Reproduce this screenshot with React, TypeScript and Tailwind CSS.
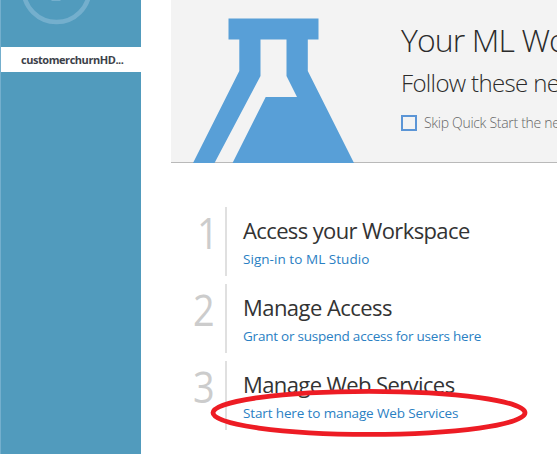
const steps = [
  { n: '1', title: 'Access your Workspace', link: 'Sign-in to ML Studio', numClass: 'pr-[6px]', titleClass: 'tracking-[-0.62px]', linkClass: 'tracking-[0.05px]' },
  { n: '2', title: 'Manage Access', link: 'Grant or suspend access for users here', numClass: 'pr-[10px]', titleClass: 'tracking-[-0.55px]', linkClass: 'tracking-[-0.22px]' },
  { n: '3', title: 'Manage Web Services', link: 'Start here to manage Web Services', numClass: 'pr-[10px]', titleClass: 'tracking-[-0.6px]', linkClass: 'tracking-[-0.13px]' },
];

function Sidebar() {
  return (
    <aside className="w-[141px] shrink-0 border-l border-[#74afcd] bg-[#519bbd]">
      <svg className="block h-[47px] w-full" viewBox="1 0 140 47">
        <circle cx="56.5" cy="-11" r="33" fill="none" stroke="#74afcd" strokeWidth="4.5" />
        <rect x="51.5" y="-4" width="9" height="5" fill="#74afcd" />
      </svg>
      <div className="h-[25px] bg-white pl-5 text-[11px] leading-[26px] font-bold tracking-[-0.45px] whitespace-nowrap text-[#3c4149]">
        customerchurnHD...
      </div>
    </aside>
  );
}

function Flask() {
  return (
    <svg className="ml-[22px] block h-[163px] w-[161px] shrink-0" viewBox="193 0 161 163" fill="#589fd7">
      <path
        fillRule="evenodd"
        d="M228.5 18.5H318.5V39.5H307.8V71L354 163H232.5L265.7 97H297L286.5 76V39.5H260.5V76L214.5 163H193L239.3 71V39.5H228.5Z"
      />
    </svg>
  );
}

export default function App() {
  return (
    <div className="relative flex h-[454px] w-[557px] overflow-hidden bg-white font-['Open_Sans','Noto_Sans',sans-serif]">
      <Sidebar />
      <main className="ml-[30px] min-w-0 flex-1 overflow-hidden">
        <header className="flex h-[163px] border-b border-[#b9b9b9] bg-[#f3f3f3] whitespace-nowrap">
          <Flask />
          <div className="ml-[47px] pt-[18px] text-[#2b2b2b]">
            <h1 className="h-[44px] text-[32px] leading-[44px] font-light tracking-[-0.9px]">Your ML Wo</h1>
            <h2 className="mt-[3px] h-[36px] text-[24px] leading-[36px] font-light tracking-[-0.65px]">Follow these ne</h2>
            <label className="mt-[12px] flex h-5 items-center gap-[7px] text-[14px] leading-5 font-light tracking-[-0.3px] text-[#666]">
              <span className="h-4 w-4 border-2 border-[#5b95d6]" />
              Skip Quick Start the ne
            </label>
          </div>
        </header>
        <ol className="mt-[44px] flex flex-col gap-2">
          {steps.map((s) => (
            <li key={s.n} className="flex h-[69px]">
              <div className={`flex w-[54px] justify-end text-[43px] leading-[51px] font-[370] text-[#ccc] ${s.numClass}`}>
                <span className="origin-right scale-x-[0.88]">{s.n}</span>
              </div>
              <div className="border-l-2 border-[#e0e0e0] pl-4 whitespace-nowrap">
                <h3 className={`mt-[7px] h-8 text-[22px] leading-8 text-[#333] ${s.titleClass}`}>{s.title}</h3>
                <a className={`mt-[3px] block h-5 text-[13.5px] leading-5 text-[#2a80c3] ${s.linkClass}`}>{s.link}</a>
              </div>
            </li>
          ))}
        </ol>
      </main>
      <svg className="absolute top-[380px] left-[200px] h-[70px] w-[340px]" viewBox="200 380 340 70">
        <ellipse cx="369" cy="412.8" rx="156" ry="21.5" fill="none" stroke="#ed1c24" strokeWidth="4.8" />
      </svg>
    </div>
  );
}
